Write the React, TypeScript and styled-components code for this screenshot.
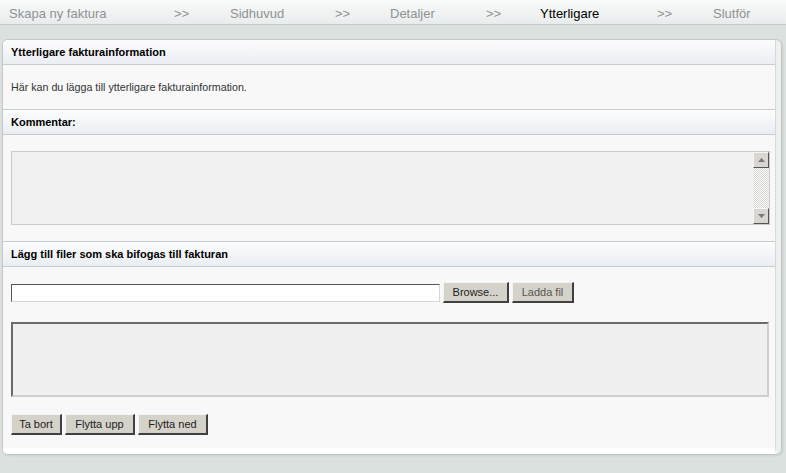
import React from 'react'
import styled, { createGlobalStyle } from 'styled-components'

const GlobalStyle = createGlobalStyle`
  body {
    margin: 0;
    background: #dae1df;
    font-family: "Liberation Sans", Arial, sans-serif;
  }
`

const Nav = styled.div`
  display: grid;
  grid-template-columns: 165px 56px 105px 55px 96px 54px 117px 56px 1fr;
  height: 24px;
  background: linear-gradient(#f9fafa, #e9ecec);
  border-bottom: 1px solid #c5cbcb;
`

const Step = styled.div<{ $active?: boolean }>`
  padding-left: 9px;
  line-height: 27px;
  font-size: 13px;
  color: ${p => (p.$active ? '#000' : '#8d9393')};
  white-space: nowrap;
`

const Page = styled.div`
  padding: 14px 4px 17px 2px;
`

const Panel = styled.div`
  border: 1px solid #c3c9c9;
  border-radius: 6px;
  background: #eef0f0;
  overflow: hidden;
  box-shadow: 1px 1px 2px rgba(0, 0, 0, 0.08);
`

const Inner = styled.div`
  margin-right: 5px;
  border-right: 1px solid #d4d9d9;
  background: #f8f8f8;
  border-bottom: 6px solid #fff;
`

const Header = styled.div<{ $first?: boolean }>`
  height: 24px;
  display: flex;
  align-items: center;
  padding-left: 8px;
  font-size: 11px;
  font-weight: bold;
  color: #000;
  background: linear-gradient(#fcfcfd, #eaeef2);
  border-top: ${p => (p.$first ? 'none' : '1px solid #c5cbd1')};
  border-bottom: 1px solid #c5cbd1;
`

const Intro = styled.div`
  height: 44px;
  display: flex;
  align-items: center;
  padding-left: 8px;
  font-size: 10.7px;
  color: #333;
`

const Section = styled.div<{ $pad: string }>`
  padding: ${p => p.$pad};
`

const CommentBox = styled.div`
  display: flex;
  height: 72px;
  border: 1px solid #cacaca;
  background: #f1f1f1;
`

const CommentArea = styled.textarea`
  flex: 1;
  border: none;
  background: transparent;
  resize: none;
  outline: none;
  font-family: inherit;
`

const Scrollbar = styled.div`
  width: 16px;
  display: flex;
  flex-direction: column;
  justify-content: space-between;
  background-color: #f4f4f4;
  background-image: repeating-conic-gradient(#d8d6d0 0 25%, #fbfbfb 0 50%);
  background-size: 2px 2px;
`

const ArrowButton = styled.div`
  height: 16px;
  display: flex;
  align-items: center;
  justify-content: center;
  background: #d8d6d0;
  border-top: 1px solid #f5f5f5;
  border-left: 1px solid #f5f5f5;
  border-right: 1px solid #555;
  border-bottom: 1px solid #555;
  box-sizing: border-box;
`

const FileRow = styled.div`
  display: flex;
  align-items: center;
  gap: 3px;
`

const FileInput = styled.input`
  width: 429px;
  height: 18px;
  box-sizing: border-box;
  margin: 0;
  background: #fff;
  border-top: 1px solid #555;
  border-left: 1px solid #555;
  border-right: 1px solid #d6d6d6;
  border-bottom: 1px solid #d6d6d6;
`

const Button = styled.button<{ $w: number; $dim?: boolean }>`
  width: ${p => p.$w}px;
  height: 21px;
  margin: 0;
  padding: 0;
  box-sizing: border-box;
  font-family: inherit;
  font-size: 11px;
  color: ${p => (p.$dim ? '#555' : '#222')};
  background: #d5d2ca;
  border-top: 1px solid #f4f4f4;
  border-left: 1px solid #f4f4f4;
  border-right: 2px solid #404040;
  border-bottom: 2px solid #404040;
`

const ListBox = styled.div`
  margin-top: 19px;
  height: 75px;
  box-sizing: border-box;
  background: #f0f0f0;
  border-top: 2px solid #6a6a6a;
  border-left: 2px solid #6a6a6a;
  border-right: 2px solid #cfcfcf;
  border-bottom: 2px solid #cfcfcf;
  margin-right: 1px;
`

const ButtonRow = styled.div`
  display: flex;
  gap: 3px;
  margin-top: 17px;
`

function Arrow({ up }: { up?: boolean }) {
  return (
    <svg width="7" height="4" viewBox="0 0 7 4">
      <polygon points={up ? '0,4 7,4 3.5,0' : '0,0 7,0 3.5,4'} fill="#7a7a7a" />
    </svg>
  )
}

export default function App() {
  return (
    <>
      <GlobalStyle />
      <Nav>
        <Step>Skapa ny faktura</Step>
        <Step>&gt;&gt;</Step>
        <Step>Sidhuvud</Step>
        <Step>&gt;&gt;</Step>
        <Step>Detaljer</Step>
        <Step>&gt;&gt;</Step>
        <Step $active>Ytterligare</Step>
        <Step>&gt;&gt;</Step>
        <Step>Slutför</Step>
      </Nav>
      <Page>
        <Panel>
          <Inner>
            <Header $first>Ytterligare fakturainformation</Header>
            <Intro>Här kan du lägga till ytterligare fakturainformation.</Intro>
            <Header>Kommentar:</Header>
            <Section $pad="16px 5px 16px 8px">
              <CommentBox>
                <CommentArea />
                <Scrollbar>
                  <ArrowButton><Arrow up /></ArrowButton>
                  <ArrowButton><Arrow /></ArrowButton>
                </Scrollbar>
              </CommentBox>
            </Section>
            <Header>Lägg till filer som ska bifogas till fakturan</Header>
            <Section $pad="15px 5px 13px 8px">
              <FileRow>
                <FileInput type="text" />
                <Button $w={66}>Browse...</Button>
                <Button $w={62} $dim>Ladda fil</Button>
              </FileRow>
              <ListBox />
              <ButtonRow>
                <Button $w={51}>Ta bort</Button>
                <Button $w={70}>Flytta upp</Button>
                <Button $w={70}>Flytta ned</Button>
              </ButtonRow>
            </Section>
          </Inner>
        </Panel>
      </Page>
    </>
  )
}
